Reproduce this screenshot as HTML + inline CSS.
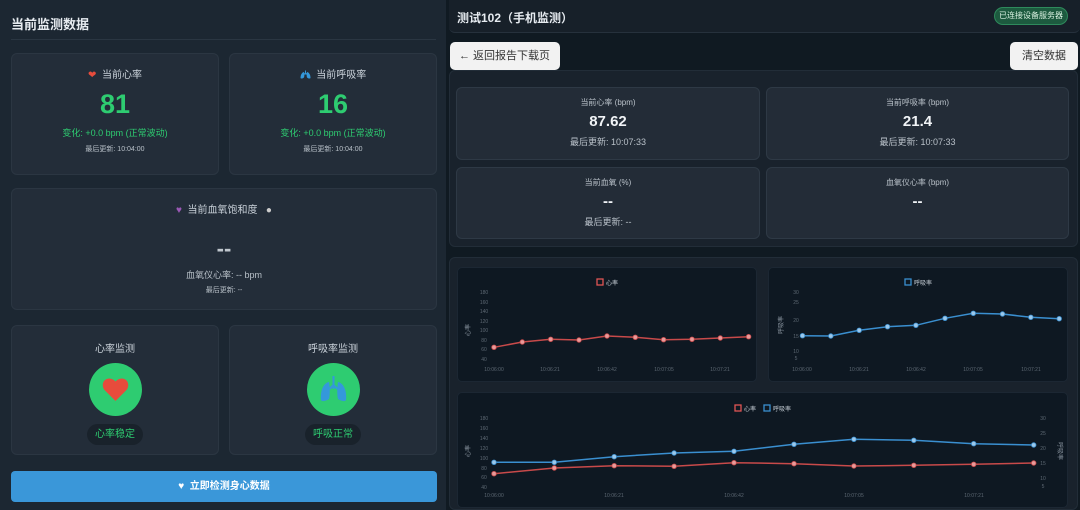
<!DOCTYPE html>
<html><head><meta charset="utf-8">
<style>
*{margin:0;padding:0;box-sizing:border-box}
body{width:1080px;height:510px;overflow:hidden;background:#101a22;font-family:"Liberation Sans","Noto Sans CJK SC",sans-serif;position:relative;color:#dfe6ec}
.a{position:absolute}
.card{position:absolute;background:#232d39;border-radius:6px;border:1px solid #2b3642}
.c{text-align:center}
.sc{position:absolute;background:#232c37;border:1px solid #2e3945;border-radius:6px;text-align:center}
.chart{position:absolute;background:#0e1822;border-radius:5px;border:1px solid #1c2733}
</style></head><body>
<div class="a" style="left:0;top:0;width:446px;height:510px;background:#1c2732"></div>
<div class="a" style="left:11px;top:14px;font-size:13px;font-weight:bold;color:#e6ebf0">当前监测数据</div>
<div class="a" style="left:11px;top:39px;width:425px;height:1px;background:#2a3642"></div>

<div class="card" style="left:11px;top:53px;width:208px;height:122px">
 <div class="c" style="margin-top:12px;font-size:10px;color:#c9d1d9"><span style="color:#e74c3c">❤</span>&nbsp; 当前心率</div>
 <div class="c" style="margin-top:8px;font-size:27px;font-weight:bold;color:#2ecc71">81</div>
 <div class="c" style="margin-top:6px;font-size:9px;color:#2ecc71">变化: +0.0 bpm (正常波动)</div>
 <div class="c" style="margin-top:5px;font-size:7px;color:#b8c0c8">最后更新: 10:04:00</div>
</div>
<div class="card" style="left:229px;top:53px;width:208px;height:122px">
 <div class="c" style="margin-top:12px;font-size:10px;color:#c9d1d9"><svg width="11" height="9" viewBox="0 0 22 18" style="vertical-align:-1px"><path d="M11 1v8M11 6l-3 3M11 6l3 3" stroke="#3498db" stroke-width="2" fill="none"/><path d="M8 4C3 5 1 11 1 16c1 2 5 1 7-1 1-3 1-8 0-11z" fill="#3498db"/><path d="M14 4c5 1 7 7 7 12-1 2-5 1-7-1-1-3-1-8 0-11z" fill="#3498db"/></svg>&nbsp; 当前呼吸率</div>
 <div class="c" style="margin-top:8px;font-size:27px;font-weight:bold;color:#2ecc71">16</div>
 <div class="c" style="margin-top:6px;font-size:9px;color:#2ecc71">变化: +0.0 bpm (正常波动)</div>
 <div class="c" style="margin-top:5px;font-size:7px;color:#b8c0c8">最后更新: 10:04:00</div>
</div>
<div class="card" style="left:11px;top:188px;width:426px;height:122px">
 <div class="c" style="margin-top:12px;font-size:10px;color:#c9d1d9"><span style="color:#9b59b6">♥</span>&nbsp; 当前血氧饱和度 &nbsp;&nbsp;<span style="color:#ccc">●</span></div>
 <div class="c" style="margin-top:20px;font-size:22px;font-weight:bold;color:#c0c7ce">--</div>
 <div class="c" style="margin-top:6px;font-size:9px;color:#b8c0c8">血氧仪心率: -- bpm</div>
 <div class="c" style="margin-top:4px;font-size:7px;color:#b8c0c8">最后更新: --</div>
</div>
<div class="card" style="left:11px;top:325px;width:208px;height:130px">
 <div class="c" style="margin-top:14px;font-size:10px;color:#c9d1d9">心率监测</div>
 <div style="margin:8px auto 0;width:53px;height:53px;border-radius:50%;background:#2ecc71">
  <svg width="53" height="53" viewBox="0 0 53 53"><path d="M26.5 38L16 27.5c-3-3-3-8 0-10.5s7.5-2 10.5 1.5c3-3.5 7.5-4 10.5-1.5s3 7.5 0 10.5z" fill="#e74c3c"/></svg>
 </div>
 <div style="margin:8px auto 0;width:56px;height:21px;border-radius:11px;background:#19222b;text-align:center;line-height:21px;font-size:10px;color:#2ecc71">心率稳定</div>
</div>
<div class="card" style="left:229px;top:325px;width:208px;height:130px">
 <div class="c" style="margin-top:14px;font-size:10px;color:#c9d1d9">呼吸率监测</div>
 <div style="margin:8px auto 0;width:53px;height:53px;border-radius:50%;background:#2ecc71">
  <svg width="53" height="53" viewBox="0 0 53 53"><path d="M26.5 13v13M26.5 22l-4 4M26.5 22l4 4" stroke="#3498db" stroke-width="2" fill="none"/><path d="M22 19c-6 1-9 10-8 18 1 2 5 1 8-1 1-4 1-12 0-17z" fill="#3498db"/><path d="M31 19c6 1 9 10 8 18-1 2-5 1-8-1-1-4-1-12 0-17z" fill="#3498db"/></svg>
 </div>
 <div style="margin:8px auto 0;width:56px;height:21px;border-radius:11px;background:#19222b;text-align:center;line-height:21px;font-size:10px;color:#2ecc71">呼吸正常</div>
</div>
<div class="a" style="left:11px;top:471px;width:426px;height:31px;background:#3a97d9;border-radius:4px;text-align:center;line-height:31px;font-size:10px;font-weight:bold;color:#fff">♥&nbsp; 立即检测身心数据</div>

<div class="a" style="left:449px;top:0;width:631px;height:33px;background:#172029;border-bottom:1px solid #26313c;border-radius:0 0 6px 6px"></div>
<div class="a" style="left:457px;top:9px;font-size:12px;font-weight:bold;color:#e6ebf0">测试102（手机监测）</div>
<div class="a" style="left:994px;top:7px;width:74px;height:18px;border-radius:9px;background:#1d5a3f;border:1px solid #2e8a5c;font-size:8px;line-height:16px;text-align:center;color:#d8f0e0">已连接设备服务器</div>
<div class="a" style="left:450px;top:42px;width:110px;height:28px;background:#f2f2f2;border-radius:5px;font-size:11px;line-height:28px;padding-left:9px;color:#333">← 返回报告下载页</div>
<div class="a" style="left:1010px;top:42px;width:68px;height:28px;background:#f2f2f2;border-radius:5px;font-size:11px;line-height:28px;text-align:center;color:#333">清空数据</div>

<div class="a" style="left:449px;top:70px;width:629px;height:177px;background:#19222c;border-radius:6px;border:1px solid #222d38"></div>
<div class="sc" style="left:456px;top:87px;width:304px;height:73px">
 <div style="margin-top:9px;font-size:8px;color:#b8c0c8">当前心率 (bpm)</div>
 <div style="margin-top:5px;font-size:15px;font-weight:bold;color:#f0f3f6">87.62</div>
 <div style="margin-top:5px;font-size:9px;color:#b8c0c8">最后更新: 10:07:33</div>
</div>
<div class="sc" style="left:766px;top:87px;width:303px;height:73px">
 <div style="margin-top:9px;font-size:8px;color:#b8c0c8">当前呼吸率 (bpm)</div>
 <div style="margin-top:5px;font-size:15px;font-weight:bold;color:#f0f3f6">21.4</div>
 <div style="margin-top:5px;font-size:9px;color:#b8c0c8">最后更新: 10:07:33</div>
</div>
<div class="sc" style="left:456px;top:167px;width:304px;height:72px">
 <div style="margin-top:9px;font-size:8px;color:#b8c0c8">当前血氧 (%)</div>
 <div style="margin-top:5px;font-size:15px;font-weight:bold;color:#f0f3f6">--</div>
 <div style="margin-top:5px;font-size:9px;color:#b8c0c8">最后更新: --</div>
</div>
<div class="sc" style="left:766px;top:167px;width:303px;height:72px">
 <div style="margin-top:9px;font-size:8px;color:#b8c0c8">血氧仪心率 (bpm)</div>
 <div style="margin-top:5px;font-size:15px;font-weight:bold;color:#f0f3f6">--</div>
</div>

<div class="a" style="left:449px;top:257px;width:629px;height:253px;background:#19222c;border-radius:6px;border:1px solid #222d38"></div>
<div class="chart" style="left:457px;top:267px;width:300px;height:115px"></div>
<div class="chart" style="left:768px;top:267px;width:300px;height:115px"></div>
<div class="chart" style="left:457px;top:392px;width:611px;height:116px"></div>

<svg class="a" style="left:0;top:0" width="1080" height="510" font-family="Liberation Sans, Noto Sans CJK SC, sans-serif">
 <g font-size="5" fill="#5d6873" text-anchor="middle">
  <text x="484" y="294">180</text><text x="484" y="304">160</text><text x="484" y="313">140</text><text x="484" y="323">120</text><text x="484" y="332">100</text><text x="484" y="342">80</text><text x="484" y="351">60</text><text x="484" y="361">40</text>
  <text x="494" y="371">10:06:00</text><text x="550" y="371">10:06:21</text><text x="607" y="371">10:06:42</text><text x="664" y="371">10:07:05</text><text x="720" y="371">10:07:21</text>
  <text x="796" y="294">30</text><text x="796" y="304">25</text><text x="796" y="322">20</text><text x="796" y="338">15</text><text x="796" y="353">10</text><text x="796" y="360">5</text>
  <text x="802" y="371">10:06:00</text><text x="859" y="371">10:06:21</text><text x="916" y="371">10:06:42</text><text x="973" y="371">10:07:05</text><text x="1031" y="371">10:07:21</text>
  <text x="484" y="420">180</text><text x="484" y="430">160</text><text x="484" y="440">140</text><text x="484" y="450">120</text><text x="484" y="460">100</text><text x="484" y="470">80</text><text x="484" y="479">60</text><text x="484" y="489">40</text>
  <text x="1043" y="420">30</text><text x="1043" y="435">25</text><text x="1043" y="450">20</text><text x="1043" y="465">15</text><text x="1043" y="480">10</text><text x="1043" y="488">5</text>
  <text x="494" y="497">10:06:00</text><text x="614" y="497">10:06:21</text><text x="734" y="497">10:06:42</text><text x="854" y="497">10:07:05</text><text x="974" y="497">10:07:21</text>
 </g>
 <g font-size="6" fill="#8a95a0"><text x="470" y="330" transform="rotate(-90 470 330)" text-anchor="middle">心率</text><text x="783" y="325" transform="rotate(-90 783 325)" text-anchor="middle">呼吸率</text><text x="470" y="451" transform="rotate(-90 470 451)" text-anchor="middle">心率</text><text x="1058" y="451" transform="rotate(90 1058 451)" text-anchor="middle">呼吸率</text></g>
 <g font-size="6" fill="#c9d1d9">
  <rect x="597" y="279" width="6" height="6" fill="none" stroke="#e05555" stroke-width="1.3"/><text x="606" y="285">心率</text>
  <rect x="905" y="279" width="6" height="6" fill="none" stroke="#3a8fd0" stroke-width="1.3"/><text x="914" y="285">呼吸率</text>
  <rect x="735" y="405" width="6" height="6" fill="none" stroke="#e05555" stroke-width="1.3"/><text x="744" y="411">心率</text>
  <rect x="764" y="405" width="6" height="6" fill="none" stroke="#3a8fd0" stroke-width="1.3"/><text x="773" y="411">呼吸率</text>
 </g>
 <g fill="none" stroke-width="1.5">
  <polyline stroke="#c84a4a" points="494,347.3 522.3,342 550.7,339.3 579,340 607,336 635.3,337.3 663.6,339.7 692,339.3 720.3,338 748.6,336.7"/>
  <polyline stroke="#3a8fd0" points="802.5,335.7 830.8,336 859.2,330.3 887.5,326.7 915.9,325.3 945,318.3 973.3,313.3 1002.5,314 1030.8,317.3 1059.2,318.7"/>
  <polyline stroke="#3a8fd0" points="494,462.3 554.3,462.3 614.2,456.7 674.1,453 734,451.3 794,444.3 853.9,439.3 913.8,440.3 973.7,443.7 1033.7,445"/>
  <polyline stroke="#c84a4a" points="494,473.7 554.3,468 614.2,465.7 674.1,466.3 734,462.7 794,463.7 853.9,466 913.8,465.3 973.7,464.3 1033.7,463"/>
 </g>
 <g fill="#e89a9a" stroke="#c84a4a" stroke-width="0.8">
  <circle cx="494" cy="347.3" r="2.3"/><circle cx="522.3" cy="342" r="2.3"/><circle cx="550.7" cy="339.3" r="2.3"/><circle cx="579" cy="340" r="2.3"/><circle cx="607" cy="336" r="2.3"/><circle cx="635.3" cy="337.3" r="2.3"/><circle cx="663.6" cy="339.7" r="2.3"/><circle cx="692" cy="339.3" r="2.3"/><circle cx="720.3" cy="338" r="2.3"/><circle cx="748.6" cy="336.7" r="2.3"/>
  <circle cx="494" cy="473.7" r="2.3"/><circle cx="554.3" cy="468" r="2.3"/><circle cx="614.2" cy="465.7" r="2.3"/><circle cx="674.1" cy="466.3" r="2.3"/><circle cx="734" cy="462.7" r="2.3"/><circle cx="794" cy="463.7" r="2.3"/><circle cx="853.9" cy="466" r="2.3"/><circle cx="913.8" cy="465.3" r="2.3"/><circle cx="973.7" cy="464.3" r="2.3"/><circle cx="1033.7" cy="463" r="2.3"/>
 </g>
 <g fill="#9cc8ea" stroke="#3a8fd0" stroke-width="0.8">
  <circle cx="802.5" cy="335.7" r="2.3"/><circle cx="830.8" cy="336" r="2.3"/><circle cx="859.2" cy="330.3" r="2.3"/><circle cx="887.5" cy="326.7" r="2.3"/><circle cx="915.9" cy="325.3" r="2.3"/><circle cx="945" cy="318.3" r="2.3"/><circle cx="973.3" cy="313.3" r="2.3"/><circle cx="1002.5" cy="314" r="2.3"/><circle cx="1030.8" cy="317.3" r="2.3"/><circle cx="1059.2" cy="318.7" r="2.3"/>
  <circle cx="494" cy="462.3" r="2.3"/><circle cx="554.3" cy="462.3" r="2.3"/><circle cx="614.2" cy="456.7" r="2.3"/><circle cx="674.1" cy="453" r="2.3"/><circle cx="734" cy="451.3" r="2.3"/><circle cx="794" cy="444.3" r="2.3"/><circle cx="853.9" cy="439.3" r="2.3"/><circle cx="913.8" cy="440.3" r="2.3"/><circle cx="973.7" cy="443.7" r="2.3"/><circle cx="1033.7" cy="445" r="2.3"/>
 </g>
</svg>
</body></html>
